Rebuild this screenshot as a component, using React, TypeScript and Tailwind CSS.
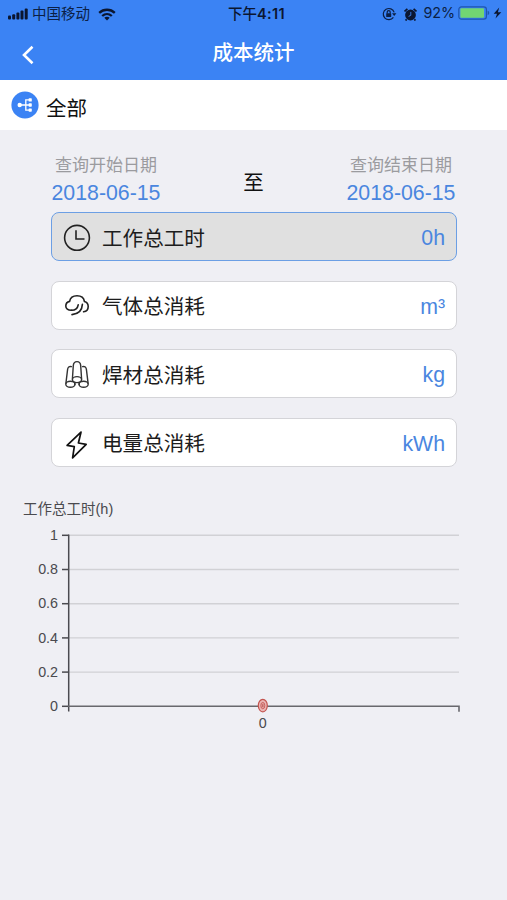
import type { ReactNode } from "react";

const ClockIcon = () => (
  <svg className="overflow-visible" width="28" height="28" viewBox="0 -0.8 28 28" fill="none" stroke="#222" strokeWidth="1.6">
    <circle cx="14" cy="14" r="12.4" />
    <path d="M13 6.5V15.2H21.5" />
  </svg>
);

const CloudIcon = () => (
  <svg className="overflow-visible" width="28" height="28" viewBox="0 -0.8 28 28" fill="none" stroke="#222" strokeWidth="1.6" strokeLinecap="round">
    <path d="M8.6 18.5C4.8 18.6 2.8 16.8 2.8 14.2C2.8 11.8 4.4 10.1 6.6 9.6C7.2 6.3 10.2 4 14 4C18 4 20.9 6.3 21.4 9.6C23.8 10.3 25.2 12.1 25.2 14.6C25.2 17.6 23.4 19.6 20.6 20" />
    <path d="M8.6 18.5C12.4 18.3 14.6 16.6 15.2 13" />
    <path d="M9 22.8C14.6 22.4 19 19 19.4 12.6" />
  </svg>
);

const WireIcon = () => (
  <svg className="overflow-visible" width="28" height="28" viewBox="0 -0.4 28 28" fill="none" stroke="#333" strokeWidth="1.4" strokeLinecap="round">
    <path d="M9.4 18.6L10.3 5.2C10.5 2.6 11.9 1.2 14 1.2S17.5 2.6 17.7 5.2L18.6 18.6" />
    <path d="M8.4 6.2C6 5.8 4.9 6.8 4.6 9L2.9 23" />
    <path d="M19.6 6.2C22 5.8 23.1 6.8 23.4 9L25.1 23" />
    <ellipse cx="14" cy="19.2" rx="4.6" ry="3" />
    <ellipse cx="7.4" cy="23.9" rx="4.6" ry="3" />
    <ellipse cx="20.6" cy="23.9" rx="4.6" ry="3" />
    <path d="M11.8 22V24M16.2 22V24" />
  </svg>
);

const BoltIcon = () => (
  <svg className="overflow-visible" width="28" height="28" viewBox="0 0 28 28" fill="none" stroke="#111" strokeWidth="1.7" strokeLinejoin="round">
    <path d="M18 4.2L4.1 17.4L11.3 18.6L9.6 29.8L23.2 16.4L15.4 15Z" />
  </svg>
);

const METRICS: { label: string; value: string; icon: ReactNode; active?: boolean }[] = [
  { label: "工作总工时", value: "0h", icon: <ClockIcon />, active: true },
  { label: "气体总消耗", value: "m³", icon: <CloudIcon /> },
  { label: "焊材总消耗", value: "kg", icon: <WireIcon /> },
  { label: "电量总消耗", value: "kWh", icon: <BoltIcon /> },
];

const TICKS = ["1", "0.8", "0.6", "0.4", "0.2", "0"];

function StatusBar() {
  return (
    <div className="grid h-7 grid-cols-3 items-center pl-2 pr-[5px] text-[14.5px] text-[#0b1f45]">
      <div className="flex items-center">
        <svg width="20" height="12" viewBox="0 0 20 12" fill="#0b1630">
          <rect x="0" y="7.6" width="3" height="3.8" rx="1" />
          <rect x="4.2" y="6.2" width="3" height="5.2" rx="1" />
          <rect x="8.4" y="4.6" width="3" height="6.8" rx="1" />
          <rect x="12.5" y="2.6" width="3" height="8.8" rx="1" />
          <rect x="16.7" y="0.4" width="3" height="11" rx="1" />
        </svg>
        <span className="ml-1 mt-0.5 whitespace-nowrap">中国移动</span>
        <svg className="ml-2" width="18" height="13" viewBox="0 0 18 13" fill="none" stroke="#0b1630" strokeWidth="2.3">
          <path d="M1.2 4.9C5.6 0.7 12.4 0.7 16.8 4.9" />
          <path d="M4.2 8C7 5.4 11 5.4 13.8 8" />
          <path d="M9 12.6L6.3 9.8C7.8 8.5 10.2 8.5 11.7 9.8Z" fill="#0b1630" stroke="none" />
        </svg>
      </div>
      <div className="whitespace-nowrap pl-[3px] text-center font-medium text-[#0b1630]">
        下午<span className="font-['Inter'] text-[14.5px] font-semibold tracking-[0.4px]">4:11</span>
      </div>
      <div className="flex items-center justify-end">
        <svg width="15" height="14" viewBox="0 0 15 14" fill="none" stroke="#0b1f45" strokeWidth="1.2">
          <path d="M11.4 10.4A5.6 5.6 0 1 1 12.2 5.4" />
          <path d="M10 6.2H14.4L12.2 9Z" fill="#0b1f45" stroke="none" />
          <rect x="4.2" y="6.2" width="5" height="3.9" rx="0.5" fill="#0b1f45" stroke="none" />
          <path d="M5.2 6.5V5.1A1.5 1.5 0 0 1 8.2 5.1V6.5" />
        </svg>
        <svg className="ml-[7px]" width="13" height="13" viewBox="0 0 13 13" fill="#0b1630">
          <circle cx="6.5" cy="7" r="5.4" />
          <path d="M0.5 3.5L3.4 0.8M9.6 0.8L12.5 3.5M2.6 11.2L1.6 12.6M10.4 11.2L11.4 12.6" stroke="#0b1630" strokeWidth="1.7" />
          <path d="M6.8 3.9V7.3L4.6 8.4" fill="none" stroke="#3b83f4" strokeWidth="0.9" />
        </svg>
        <span className="ml-[6px] mb-0.5 font-['Inter'] text-[14.3px]">92%</span>
        <svg className="-mt-0.5 ml-[3px]" width="33" height="14" viewBox="0 0 33 14">
          <rect x="0.8" y="0.8" width="27.6" height="12.4" rx="2.6" fill="none" stroke="#1f56ad" strokeWidth="1.2" />
          <rect x="2.4" y="2.3" width="23.6" height="9.4" rx="1" fill="#72d572" />
          <path d="M29.6 4.8C31.8 5.2 31.8 8.8 29.6 9.2Z" fill="#1f56ad" />
        </svg>
        <svg className="-mt-0.5 ml-[2px]" width="9" height="12" viewBox="0 0 9 12" fill="#0b1630">
          <path d="M6.2 0.4L0.7 6.7H4L2.5 11.6L8.3 5.2H4.9Z" />
        </svg>
      </div>
    </div>
  );
}

function DateField({ label, value }: { label: string; value: string }) {
  return (
    <div className="flex w-[110px] flex-col items-center whitespace-nowrap">
      <span className="text-[17px] leading-6 text-[#9b9b9f]">{label}</span>
      <span className="mt-px text-[21.3px] leading-7 text-[#4a86df]">{value}</span>
    </div>
  );
}

function Chart() {
  return (
    <svg className="block" width="507" height="250" viewBox="0 490 507 250" fontSize="14.3" fill="#4a4a4e">
      <text x="23" y="514" fontSize="14.5">工作总工时(h)</text>
      {TICKS.map((t, i) => {
        const y = 535.3 + i * 34.2;
        return (
          <g key={t}>
            {t !== "0" && <path d={`M69 ${y}H459`} stroke="#d1d1d5" strokeWidth="1.4" />}
            <path d={`M62 ${y}H69`} stroke="#4b4b50" strokeWidth="1.5" />
            <text x="58" y={y + 4.6} textAnchor="end">{t}</text>
          </g>
        );
      })}
      <path d="M68.7 534.6V711.5" stroke="#4b4b50" strokeWidth="1.5" />
      <path d="M68 706.3H459V711.8" fill="none" stroke="#68686d" strokeWidth="1.6" />
      <ellipse cx="262.8" cy="705.6" rx="4.5" ry="6.2" fill="#eab6b5" stroke="#c4544f" strokeWidth="1.2" />
      <ellipse cx="262.8" cy="705.6" rx="2" ry="3.2" fill="#e3a09e" stroke="#c4544f" strokeWidth="0.8" />
      <path d="M262.8 704.2V707" stroke="#a94440" strokeWidth="0.8" />
      <text x="262.8" y="728" textAnchor="middle">0</text>
    </svg>
  );
}

export default function App() {
  return (
    <div className="flex h-[900px] w-[507px] flex-col overflow-hidden bg-[#efeff4] font-['Liberation_Sans','Noto_Sans_CJK_SC',sans-serif]">
      <header className="h-20 shrink-0 bg-[#3b83f4]">
        <StatusBar />
        <div className="grid h-[50px] grid-cols-[60px_1fr_60px] items-center text-white">
          <svg className="ml-[21px] mt-[3px]" width="14" height="20" viewBox="0 0 14 20" fill="none" stroke="white" strokeWidth="2.6">
            <path d="M11.5 1.8L3 10L11.5 18.2" />
          </svg>
          <h1 className="pt-px text-center text-[20.5px] font-medium">成本统计</h1>
        </div>
      </header>

      <div className="flex h-[50px] shrink-0 items-center bg-white pl-[11px]">
        <svg width="28" height="28" viewBox="0 0 28 28">
          <circle cx="14" cy="14" r="13.6" fill="#3b83f4" />
          <g fill="none" stroke="white" strokeWidth="1.3">
            <path d="M9 14H19M19 8.9H14.8V19.1H19" />
          </g>
          <g fill="white">
            <circle cx="8.7" cy="14" r="2.2" />
            <rect x="17.6" y="7.2" width="3.2" height="3.4" rx="0.7" />
            <rect x="17.6" y="12.3" width="3.2" height="3.4" rx="0.7" />
            <rect x="17.6" y="17.4" width="3.2" height="3.4" rx="0.7" />
          </g>
        </svg>
        <span className="ml-[7px] mt-[9px] text-[20.5px] text-[#111]">全部</span>
      </div>

      <div className="flex h-[82px] shrink-0 items-start justify-between px-[51px] pt-6">
        <DateField label="查询开始日期" value="2018-06-15" />
        <span className="mt-[15px] text-[20.5px] leading-7 text-[#111]">至</span>
        <DateField label="查询结束日期" value="2018-06-15" />
      </div>

      <div className="flex shrink-0 flex-col gap-[19.6px] pl-[51px] pr-[50px]">
        {METRICS.map((m) => (
          <div
            key={m.label}
            className={`flex h-[49px] items-center rounded-[8px] border-[1.5px] pl-[11px] pr-[11px] ${
              m.active ? "border-[#6c9fe4] bg-[#e0e0e0]" : "border-[#d4d4d8] bg-white"
            }`}
          >
            {m.icon}
            <span className="ml-[11px] pt-[5px] text-[20.6px] text-[#1c1c1c]">{m.label}</span>
            <span className="ml-auto pt-[5px] text-[21.3px] text-[#4a86df]">{m.value}</span>
          </div>
        ))}
      </div>

      <div className="mt-[23px] shrink-0">
        <Chart />
      </div>
    </div>
  );
}
